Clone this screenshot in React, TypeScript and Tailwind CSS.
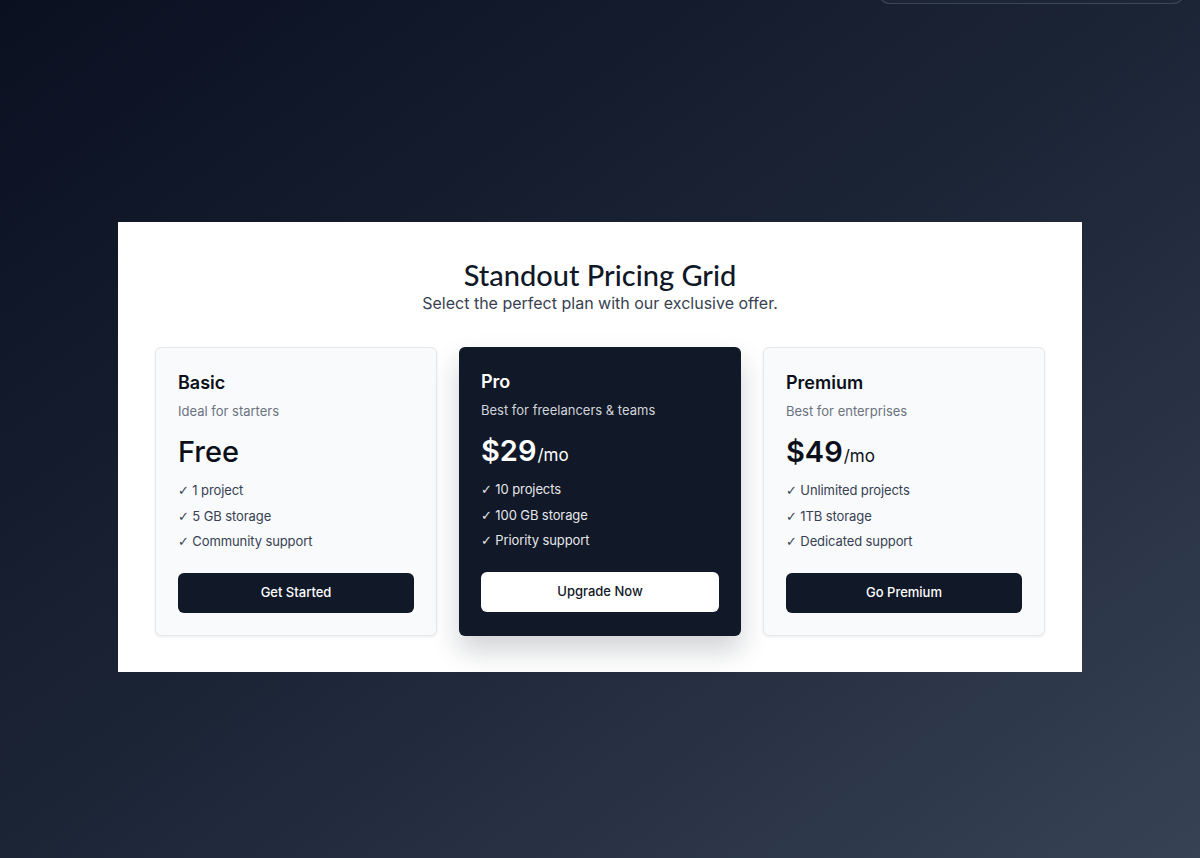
import React from 'react';

type Plan = {
  name: string;
  tagline: string;
  price: string;
  suffix?: string;
  features: string[];
  cta: string;
  featured?: boolean;
};

const plans: Plan[] = [
  {
    name: 'Basic',
    tagline: 'Ideal for starters',
    price: 'Free',
    features: ['1 project', '5 GB storage', 'Community support'],
    cta: 'Get Started',
  },
  {
    name: 'Pro',
    tagline: 'Best for freelancers & teams',
    price: '$29',
    suffix: '/mo',
    features: ['10 projects', '100 GB storage', 'Priority support'],
    cta: 'Upgrade Now',
    featured: true,
  },
  {
    name: 'Premium',
    tagline: 'Best for enterprises',
    price: '$49',
    suffix: '/mo',
    features: ['Unlimited projects', '1TB storage', 'Dedicated support'],
    cta: 'Go Premium',
  },
];

function PlanCard({ plan }: { plan: Plan }) {
  const dark = plan.featured;
  return (
    <div
      className={`flex flex-col rounded-md px-[22px] pt-[21px] pb-[22px] ${
        dark
          ? 'bg-[#111827] text-white shadow-[0_14px_28px_rgba(17,24,39,0.2)]'
          : 'bg-[#f8fafc] text-[#0b0f19] border border-[#e5e7eb] shadow-[0_1px_3px_rgba(0,0,0,0.08)]'
      }`}
    >
      <h3 className="text-lg font-semibold leading-7">{plan.name}</h3>
      <p className={`mt-1 text-[13px] leading-5 ${dark ? 'text-[#d1d5db]' : 'text-[#6b7280]'}`}>
        {plan.tagline}
      </p>
      <div className="mt-[13px] h-9 flex items-baseline">
        <span className={`text-[29px] leading-9 ${plan.suffix ? 'font-semibold' : 'font-medium'}`}>
          {plan.price}
        </span>
        {plan.suffix && <span className="text-[17px] leading-9 ml-[1px]">{plan.suffix}</span>}
      </div>
      <ul className={`mt-2 text-[13px] leading-[25.5px] tracking-[-0.1px] ${dark ? 'text-[#e5e7eb]' : 'text-[#374151]'}`}>
        {plan.features.map(f => (
          <li key={f} className="h-[25.5px] overflow-visible">
            <span style={{ fontFamily: '"DejaVu Sans", sans-serif' }} className="text-[13px] leading-none">✓</span> {f}
          </li>
        ))}
      </ul>
      <button
        className={`mt-[18px] h-10 w-full rounded-md text-[13px] font-medium ${
          dark ? 'bg-white text-[#111827]' : 'bg-[#111827] text-white'
        }`}
      >
        {plan.cta}
      </button>
    </div>
  );
}

export default function App() {
  return (
    <div
      className="relative min-h-screen overflow-hidden bg-gradient-to-br from-[#0a1020] via-[#1c2536] to-[#374255] pt-[222px] pb-[186px]"
      style={{ fontFamily: 'Inter, "Noto Sans", sans-serif' }}
    >
      <div className="absolute top-[-40px] left-[878px] h-11 w-[307px] rounded-xl border border-[#4b5563]/70 bg-[#1f2937]/60" />
      <div className="mx-auto w-[964px] bg-white px-[37px] pt-[35px] pb-[36px]">
        <h1
          className="text-center text-[29px] font-medium leading-9 text-[#111827]"
          style={{ fontFamily: 'Lato, "Open Sans", sans-serif' }}
        >
          Standout Pricing Grid
        </h1>
        <p className="-mt-[2px] text-center text-[16px] leading-6 text-[#374151]">
          Select the perfect plan with our exclusive offer.
        </p>
        <div className="mt-8 grid grid-cols-3 gap-[22px]">
          {plans.map(p => (
            <PlanCard key={p.name} plan={p} />
          ))}
        </div>
      </div>
    </div>
  );
}
